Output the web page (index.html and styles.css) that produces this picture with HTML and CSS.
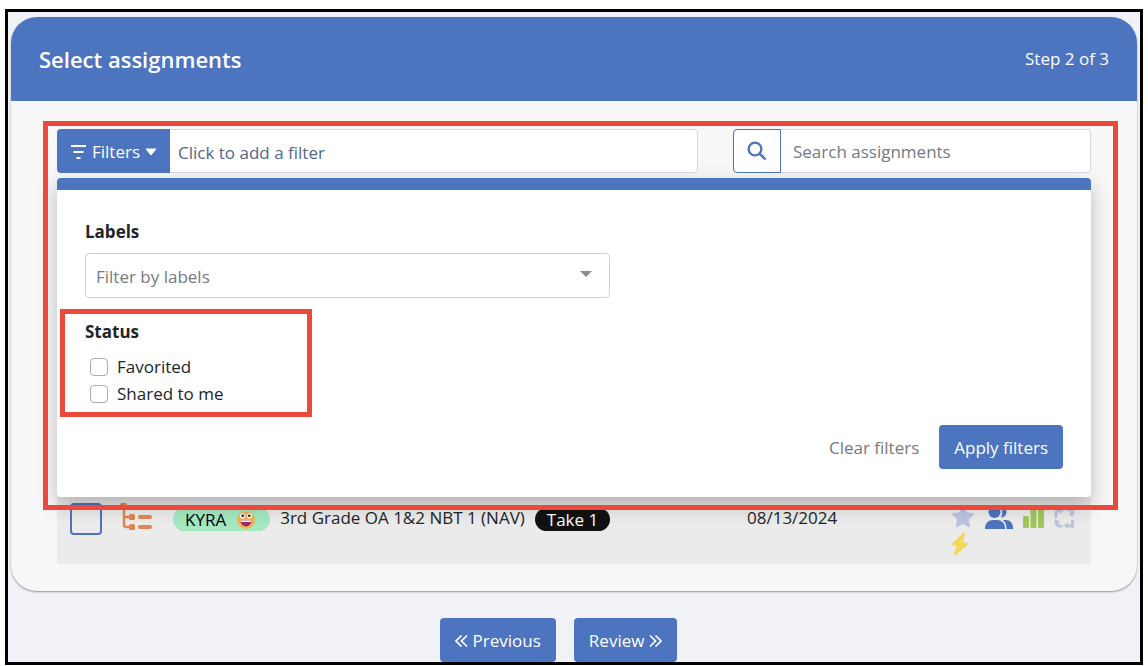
FILE: index.html
```html
<!DOCTYPE html>
<html lang="en">
  <head>
    <meta charset="utf-8">
    <title>Select assignments</title>
    <link rel="stylesheet" href="styles.css">
  </head>
  <body>
    <main class="frame">
      <section class="card">
        <header class="card-header">
          <h1>Select assignments</h1>
          <span>Step 2 of 3</span>
        </header>
        <div class="card-body">
          <div class="filter-area">
            <div class="toolbar">
              <div class="filter-group">
                <button type="button" class="btn filter-btn">
                  <svg width="17" height="16" viewBox="0 0 17 16"><path d="M1 2h15M3.500 8h10M6.500 14h4" stroke="currentColor" stroke-width="2.200"/></svg>
                  Filters
                  <svg width="12" height="8" viewBox="0 0 12 8"><path d="M1 1h10L6 7z" fill="currentColor" stroke="currentColor" stroke-linejoin="round"/></svg>
                </button>
                <input type="text" class="filter-input" placeholder="Click to add a filter" aria-label="Click to add a filter">
              </div>
              <div class="search-group">
                <button type="button" class="search-btn" aria-label="Search">
                  <svg width="20" height="20" viewBox="0 0 20 20" fill="none" stroke="currentColor" stroke-width="2.400"><circle cx="8" cy="8" r="6.400"/><path d="M12.600 12.600L18.500 18.500"/></svg>
                </button>
                <input type="text" class="search-input" placeholder="Search assignments" aria-label="Search assignments">
              </div>
            </div>
            <form class="panel">
              <label class="panel-title" for="labels">Labels</label>
              <div class="select-wrap">
                <select id="labels">
                  <option>Filter by labels</option>
                </select>
                <svg class="caret" width="12" height="6" viewBox="0 0 12 6"><path d="M0 0h12L6 6z" fill="#8c8c8c"/></svg>
              </div>
              <div class="status" role="group" aria-labelledby="status-title">
                <div class="panel-title" id="status-title">Status</div>
                <label class="check"><input type="checkbox"> Favorited</label>
                <label class="check"><input type="checkbox"> Shared to me</label>
                <div class="highlight highlight-status"></div>
              </div>
              <div class="panel-footer">
                <button type="reset" class="clear-btn">Clear filters</button>
                <button type="button" class="btn">Apply filters</button>
              </div>
            </form>
            <div class="highlight highlight-filters"></div>
          </div>
          <table class="assignments">
            <tr>
              <td class="col-check"><input type="checkbox" class="row-check" aria-label="Select assignment"></td>
              <td class="col-type">
                <svg width="34" height="32" viewBox="0 0 34 32">
                  <g fill="none" stroke="#e08550" stroke-linecap="round">
                    <path d="M4 6V25Q4 27 6 27H10M4 17H10" stroke-width="2.500"/>
                    <path d="M13 7H29M20 17H30M20 27H30" stroke-width="4"/>
                  </g>
                  <g fill="#e08550"><rect x="0" y="3" width="7" height="7" rx="1.500"/><rect x="9" y="14" width="6" height="6" rx="1.500"/><rect x="9" y="24" width="6" height="6" rx="1.500"/></g>
                </svg>
              </td>
              <td class="col-name">
                <div class="name">
                  <span class="tag">KYRA
                    <svg width="20" height="20" viewBox="0 0 20 20">
                      <circle cx="10" cy="10" r="9" fill="#f0b453"/>
                      <path d="M4.500 10.500h11a5.500 6 0 0 1-11 0z" fill="#9d2a68"/>
                      <path d="M4.500 10.500h11l-.5 1.500h-10z" fill="#fff"/>
                      <g fill="#fff"><circle cx="6.500" cy="5.800" r="2.600"/><circle cx="13.500" cy="5.800" r="2.600"/></g>
                      <g fill="#222"><circle cx="6.700" cy="5.800" r="1.300"/><circle cx="13.300" cy="5.800" r="1.300"/></g>
                    </svg>
                  </span>
                  <span>3rd Grade OA 1&amp;2 NBT 1 (NAV)</span>
                  <span class="take">Take 1</span>
                </div>
              </td>
              <td class="col-date">08/13/2024</td>
              <td class="col-icons">
                <div class="icons">
                  <svg width="24" height="24" viewBox="0 0 24 24"><path d="M12 1.500l3.200 6.600 7.200 1-5.200 5.100 1.200 7.300-6.400-3.400-6.400 3.400 1.200-7.300L1.600 9.100l7.200-1z" fill="#bcc3dc" stroke="#bcc3dc" stroke-width="1.500" stroke-linejoin="round"/></svg>
                  <svg width="28" height="24" viewBox="0 0 28 24" fill="#4c74bf"><circle cx="9.500" cy="7" r="6"/><path d="M0 24v-1c0-5 4-8 8-8h4c4 0 8 3 8 8v1z"/><path d="M16 1.500a5.500 5.500 0 1 1 0 11c1.600-3 1.600-8 0-11zM18 15h3c4 0 7 3.500 7 8v1h-6.500c0-4-.8-6.500-3.500-9z"/></svg>
                  <svg width="21" height="24" viewBox="0 0 21 24" fill="#a2c55f"><rect x="0" y="11" width="6" height="12" rx="1.500"/><rect x="7.500" y="0" width="6" height="23" rx="1.500"/><rect x="15" y="4" width="6" height="19" rx="1.500"/></svg>
                  <svg width="21" height="24" viewBox="0 0 21 24"><g fill="none" stroke="#bcc3dc" stroke-width="3"><path d="M2 13V8.500a3 3 0 0 1 3-3H7M12 4.500h3.500a3 3 0 0 1 3 3V9M18.500 15v6H13M8.500 21H6a3.500 3.500 0 0 1-3.500-3"/></g><path d="M5.500 1.500l4.500 4L5.500 9.500zM14.500 8h6.500l-3.300 4zM14 17v7l-4.500-3.500zM0 19l1-5 5.500 3z" fill="#bcc3dc"/></svg>
                  <svg width="18" height="24" viewBox="0 0 18 24"><path d="M13 1.500L1.500 12.500H7L4 22.500 16.500 11.500H11z" fill="#f5d75e" stroke="#f5d75e" stroke-width="2" stroke-linejoin="round"/></svg>
                </div>
              </td>
            </tr>
          </table>
        </div>
      </section>
      <nav class="steps">
        <button type="button" class="btn">
          <svg width="13" height="14" viewBox="0 0 13 14"><path d="M6.500 1.500L1 7l5.500 5.500M12 1.500L6.500 7l5.500 5.500" fill="none" stroke="currentColor" stroke-width="1.700"/></svg>
          Previous
        </button>
        <button type="button" class="btn">
          Review
          <svg width="13" height="14" viewBox="0 0 13 14"><path d="M1 1.500L6.500 7 1 12.500M6.500 1.500L12 7l-5.500 5.500" fill="none" stroke="currentColor" stroke-width="1.700"/></svg>
        </button>
      </nav>
    </main>
  </body>
</html>
```

FILE: styles.css
```css
* {
  box-sizing: border-box;
}
body {
  margin: 0;
  padding: 9px 5px 2px 5px;
  background: #fff;
  color: #212529;
  font-family: "Open Sans", "Noto Sans", sans-serif;
  font-size: 17px;
  line-height: 24px;
}
button, input, select {
  margin: 0;
  font: inherit;
}
svg {
  display: block;
  flex: none;
}
.frame {
  padding: 5px 3px 0;
  border: 3px solid #000;
  background: #f0f2f8;
}
.card {
  border-radius: 26px;
  background: #f7f7f7;
  box-shadow: 0 1px 2px rgba(0, 0, 0, 0.4);
}
.card-header {
  display: flex;
  align-items: center;
  justify-content: space-between;
  padding: 28px;
  border-radius: 26px 26px 0 0;
  background: #4c74bf;
  color: #fff;
  line-height: 28px;
}
.card-header h1 {
  margin: 0;
  font-size: 22px;
  font-weight: 600;
}
.card-body {
  padding: 28px 46px 27px;
}
.filter-area {
  position: relative;
  z-index: 1;
}
.toolbar {
  display: flex;
  gap: 35px;
}
.filter-group, .search-group {
  display: flex;
  height: 44px;
}
.filter-group {
  flex: 641;
}
.search-group {
  flex: 358;
}
.btn {
  display: flex;
  align-items: center;
  justify-content: center;
  gap: 5px;
  height: 44px;
  padding: 2px 15px 0;
  border: none;
  border-radius: 4px;
  background: #4c74bf;
  color: #fff;
  cursor: pointer;
}
.filter-btn {
  padding: 2px 13px 0;
  border-radius: 4px 0 0 4px;
}
.filter-input, .search-input {
  flex: 1;
  min-width: 0;
  border: 1px solid #d3d7de;
  border-left: none;
  border-radius: 0 4px 4px 0;
  background: #fff;
}
.filter-input {
  padding: 3px 8px 0;
}
.filter-input::placeholder {
  color: #55658a;
}
.search-input {
  padding: 2px 12px 0;
}
.search-input::placeholder {
  color: #757a80;
}
.search-btn {
  display: flex;
  align-items: center;
  justify-content: center;
  width: 48px;
  padding: 0;
  border: 1px solid #4c74bf;
  border-radius: 4px 0 0 4px;
  background: #fff;
  color: #4c74bf;
}
.panel {
  margin-top: 5px;
  padding: 30px 28px 28px;
  border-top: 12px solid #4c74bf;
  border-radius: 4px;
  background: #fff;
  box-shadow: 0 8px 20px rgba(0, 0, 0, 0.25);
}
.panel-title {
  display: block;
  font-weight: 700;
}
.select-wrap {
  position: relative;
  max-width: 525px;
  margin-top: 9px;
}
.select-wrap select {
  display: block;
  width: 100%;
  height: 45px;
  padding: 2px 10px 0;
  border: 1px solid #ced2d8;
  border-radius: 4px;
  background: #fff;
  color: #757a80;
  appearance: none;
}
.caret {
  position: absolute;
  top: 18px;
  right: 18px;
}
.status {
  position: relative;
  margin-top: 22px;
}
.status .panel-title {
  margin-bottom: 9px;
}
.check {
  display: flex;
  align-items: center;
  gap: 9px;
  height: 27px;
  padding-left: 5px;
}
.check input {
  width: 18px;
  height: 18px;
  border: 1px solid #a9aeb5;
  border-radius: 4px;
  background: #fff;
  appearance: none;
}
.panel-footer {
  display: flex;
  justify-content: flex-end;
  gap: 20px;
  margin-top: 18px;
}
.clear-btn {
  padding: 2px 0 0;
  border: none;
  background: none;
  color: #77797c;
}
/* red callout boxes */
.highlight {
  position: absolute;
  border: 5px solid #ed483c;
  pointer-events: none;
}
.highlight-filters {
  top: -8px;
  right: -27px;
  bottom: -13px;
  left: -14px;
}
.highlight-status {
  top: -11px;
  bottom: -10px;
  left: -25px;
  width: 252px;
}
.assignments {
  width: 100%;
  border-collapse: collapse;
  table-layout: fixed;
  background: #ebebeb;
}
.assignments td {
  height: 67px;
  padding: 9px 0 0;
  vertical-align: top;
}
.assignments .col-check {
  width: 63px;
  padding: 6px 0 0 13px;
}
.assignments .col-type {
  width: 53px;
  padding-top: 3px;
}
.assignments .col-date {
  width: 204px;
}
.assignments .col-icons {
  width: 140px;
  padding-top: 8px;
}
.row-check {
  display: block;
  width: 32px;
  height: 32px;
  border: 2px solid #4c74bf;
  border-radius: 4px;
  appearance: none;
}
.name {
  display: flex;
  gap: 10px;
  white-space: nowrap;
}
.tag, .take {
  display: flex;
  align-items: center;
  gap: 10px;
  height: 23px;
  margin-top: 2px;
  padding: 0 12px;
  border-radius: 12px;
}
.tag {
  padding-right: 14px;
  background: #a3e8c1;
  color: #000;
}
.take {
  background: #111;
  color: #fff;
}
.icons {
  display: flex;
  flex-wrap: wrap;
  gap: 3px 10px;
}
.steps {
  display: flex;
  justify-content: center;
  gap: 18px;
  padding: 27px 31px 0 0;
}
```
